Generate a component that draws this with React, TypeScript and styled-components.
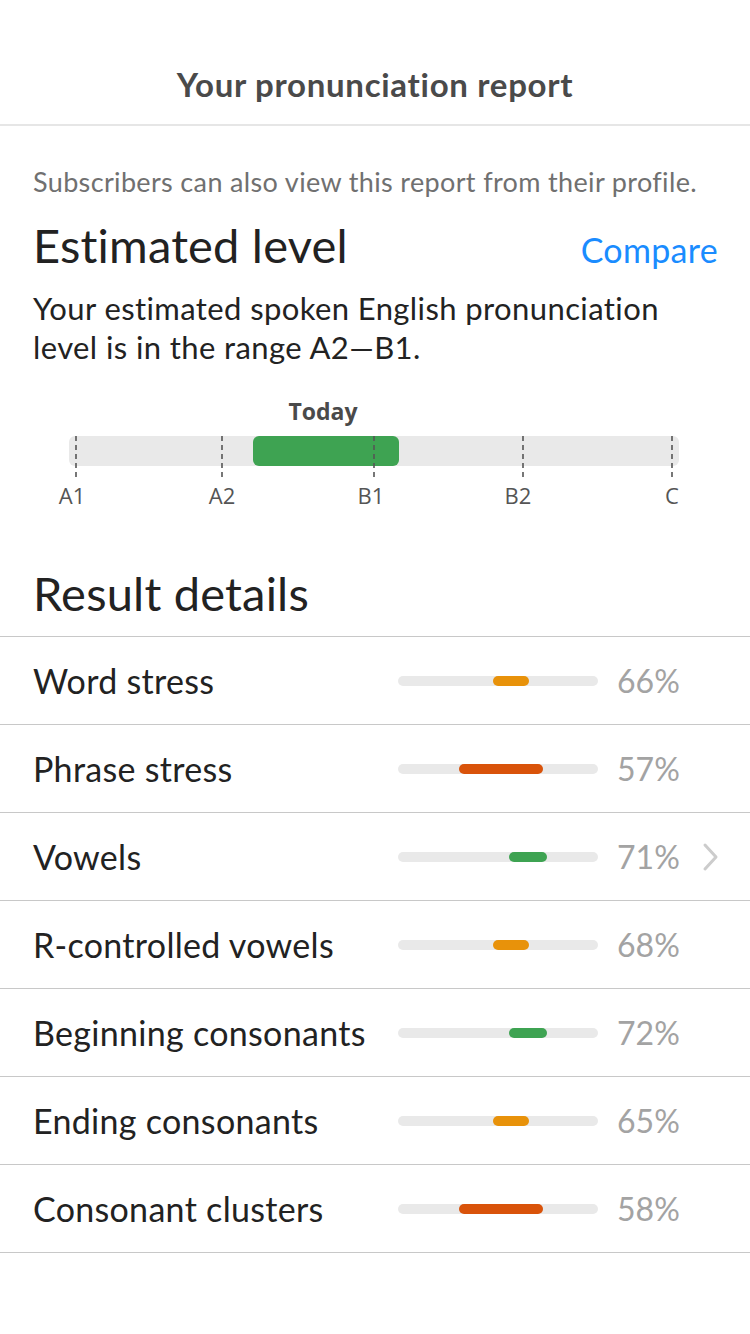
import React from 'react';
import styled, { createGlobalStyle } from 'styled-components';

const colors = {
  text: '#222222',
  header: '#4a4a4a',
  muted: '#707070',
  percent: '#a3a3a3',
  blue: '#1a8cff',
  track: '#e9e9e9',
  divider: '#c8c8c8',
  green: '#3ea352',
  orange: '#e8920a',
  red: '#d9530a',
};

const GlobalStyle = createGlobalStyle`
  html, body {
    margin: 0;
    padding: 0;
    background: #ffffff;
  }
  body {
    font-family: 'Lato', 'Noto Sans', sans-serif;
    color: ${colors.text};
  }
`;

const Page = styled.div`
  width: 750px;
  min-height: 1334px;
  background: #fff;
`;

const Header = styled.header`
  height: 126px;
  box-sizing: border-box;
  padding-top: 64px;
  border-bottom: 2px solid #e6e6e6;
  text-align: center;
`;

const HeaderTitle = styled.h1`
  margin: 0;
  font-size: 33px;
  line-height: 40px;
  font-weight: 700;
  letter-spacing: 0.7px;
  color: ${colors.header};
`;

const Content = styled.section`
  padding: 41px 32px 0 33px;
`;

const Note = styled.p`
  margin: 0;
  font-size: 27px;
  line-height: 30px;
  letter-spacing: 0.35px;
  color: ${colors.muted};
`;

const TitleRow = styled.div`
  display: flex;
  align-items: baseline;
  justify-content: space-between;
  margin-top: 21px;
`;

const SectionTitle = styled.h2`
  margin: 0;
  font-size: 47px;
  line-height: 54px;
  font-weight: 400;
  letter-spacing: 0.2px;
  color: ${colors.text};
`;

const CompareLink = styled.a`
  font-size: 34px;
  line-height: 40px;
  letter-spacing: 0.3px;
  color: ${colors.blue};
  text-decoration: none;
`;

const Summary = styled.p`
  margin: 17px 0 0;
  font-size: 31px;
  line-height: 39px;
  letter-spacing: 0.4px;
  color: ${colors.text};
`;

const Chart = styled.div`
  position: relative;
  width: 610px;
  margin: 30px 0 0 36px;
  padding-top: 39px;
  height: 84px;
`;

const TodayLabel = styled.span`
  position: absolute;
  top: 0;
  transform: translateX(-50%);
  font-family: 'Open Sans', 'Noto Sans', sans-serif;
  font-weight: 700;
  font-size: 23px;
  line-height: 28px;
  color: ${colors.header};
  white-space: nowrap;
`;

const LevelTrack = styled.div`
  position: relative;
  height: 30px;
  border-radius: 6px;
  background: ${colors.track};
`;

const LevelRange = styled.div`
  position: absolute;
  top: 0;
  bottom: 0;
  border-radius: 6px;
  background: ${colors.green};
`;

const Tick = styled.svg`
  position: absolute;
  top: 39px;
  width: 2px;
  height: 44px;
  transform: translateX(-1px);
  overflow: visible;
`;

const AxisLabel = styled.span`
  position: absolute;
  top: 85px;
  transform: translateX(-50%);
  font-family: 'Open Sans', 'Noto Sans', sans-serif;
  font-size: 22px;
  line-height: 26px;
  color: #555555;
`;

const ResultTitle = styled(SectionTitle)`
  padding: 0 33px;
  margin: 46px 0 16px;
`;

const List = styled.ul`
  list-style: none;
  margin: 0;
  padding: 0;
  border-top: 1px solid ${colors.divider};
`;

const Row = styled.li`
  display: grid;
  grid-template-columns: 365px 200px 1fr;
  align-items: center;
  height: 87px;
  padding-left: 33px;
  border-bottom: 1px solid ${colors.divider};
`;

const RowLabel = styled.span`
  font-size: 34px;
  line-height: 40px;
  letter-spacing: 0.3px;
  color: ${colors.text};
  white-space: nowrap;
`;

const ScoreTrack = styled.div`
  position: relative;
  height: 10px;
  border-radius: 5px;
  background: ${colors.track};
`;

const ScoreFill = styled.div<{ $tone: string }>`
  position: absolute;
  top: 0;
  bottom: 0;
  border-radius: 5px;
  background: ${(p) => p.$tone};
`;

const ScoreCell = styled.div`
  display: flex;
  align-items: center;
  padding-left: 19px;
`;

const Percent = styled.span`
  font-size: 32px;
  line-height: 40px;
  color: ${colors.percent};
  width: 84px;
`;

const Chevron = () => (
  <svg width="18" height="30" viewBox="0 0 18 30" fill="none">
    <path d="M4 3 L15 15 L4 27" stroke="#cccccc" strokeWidth="3" strokeLinecap="round" strokeLinejoin="round" />
  </svg>
);

const levels = [
  { name: 'A1', x: 7, label: 3 },
  { name: 'A2', x: 153, label: 153 },
  { name: 'B1', x: 305, label: 302 },
  { name: 'B2', x: 454, label: 449 },
  { name: 'C', x: 603, label: 603 },
];

const range = { from: 184, to: 330 };

type Result = { name: string; score: number; start: number; width: number; tone: string; more?: boolean };

const results: Result[] = [
  { name: 'Word stress', score: 66, start: 95, width: 36, tone: colors.orange },
  { name: 'Phrase stress', score: 57, start: 61, width: 84, tone: colors.red },
  { name: 'Vowels', score: 71, start: 111, width: 38, tone: colors.green, more: true },
  { name: 'R-controlled vowels', score: 68, start: 95, width: 36, tone: colors.orange },
  { name: 'Beginning consonants', score: 72, start: 111, width: 38, tone: colors.green },
  { name: 'Ending consonants', score: 65, start: 95, width: 36, tone: colors.orange },
  { name: 'Consonant clusters', score: 58, start: 61, width: 84, tone: colors.red },
];

const LevelChart = () => (
  <Chart>
    <TodayLabel style={{ left: (range.from + range.to) / 2 - 3 }}>Today</TodayLabel>
    <LevelTrack>
      <LevelRange style={{ left: range.from, width: range.to - range.from }} />
    </LevelTrack>
    {levels.map((l) => (
      <React.Fragment key={l.name}>
        <Tick style={{ left: l.x }} viewBox="0 0 2 44">
          <line x1="1" y1="0" x2="1" y2="44" stroke="#555" strokeWidth="1.6" strokeDasharray="5 4" />
        </Tick>
        <AxisLabel style={{ left: l.label }}>{l.name}</AxisLabel>
      </React.Fragment>
    ))}
  </Chart>
);

export default function App() {
  return (
    <Page>
      <GlobalStyle />
      <Header>
        <HeaderTitle>Your pronunciation report</HeaderTitle>
      </Header>
      <Content>
        <Note>Subscribers can also view this report from their profile.</Note>
        <TitleRow>
          <SectionTitle>Estimated level</SectionTitle>
          <CompareLink href="#">Compare</CompareLink>
        </TitleRow>
        <Summary>
          Your estimated spoken English pronunciation
          <br />
          level is in the range A2—B1.
        </Summary>
        <LevelChart />
      </Content>
      <ResultTitle>Result details</ResultTitle>
      <List>
        {results.map((r) => (
          <Row key={r.name}>
            <RowLabel>{r.name}</RowLabel>
            <ScoreTrack>
              <ScoreFill $tone={r.tone} style={{ left: r.start, width: r.width }} />
            </ScoreTrack>
            <ScoreCell>
              <Percent>{r.score}%</Percent>
              {r.more && <Chevron />}
            </ScoreCell>
          </Row>
        ))}
      </List>
    </Page>
  );
}
